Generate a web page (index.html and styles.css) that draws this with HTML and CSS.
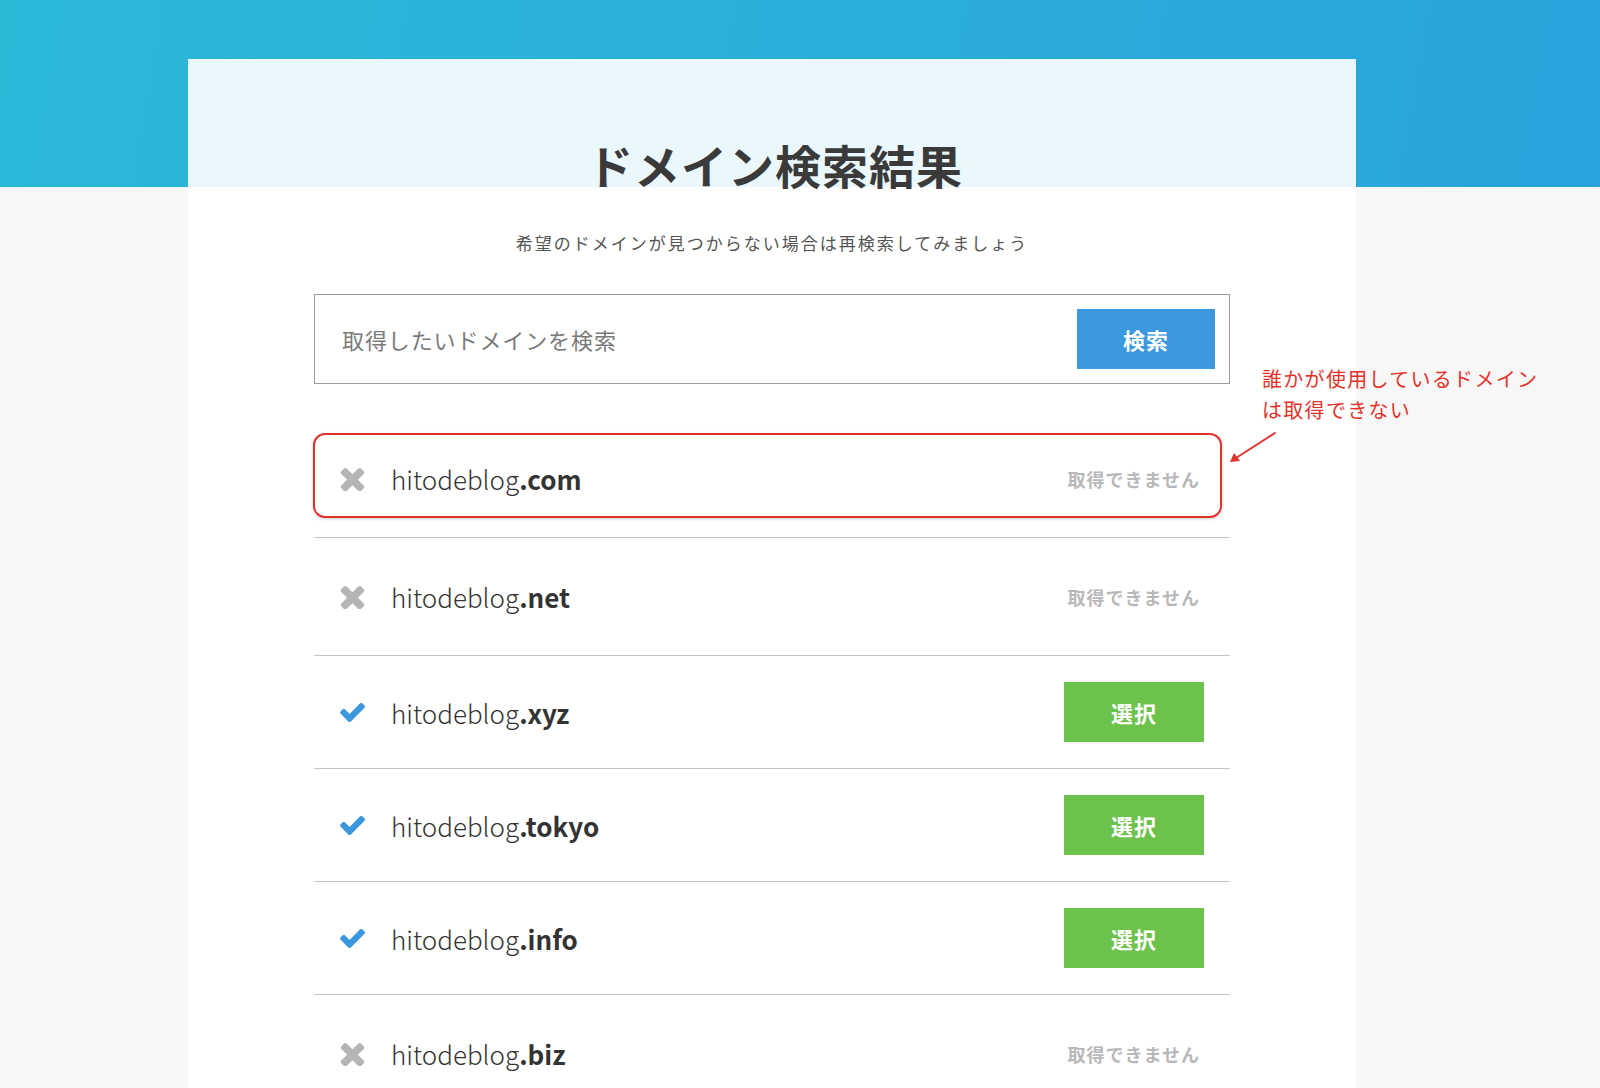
FILE: index.html
```html
<!DOCTYPE html>
<html lang="ja">
<head>
<meta charset="utf-8">
<title>ドメイン検索結果</title>
<link rel="stylesheet" href="styles.css">
</head>
<body>
<div class="page">
  <main class="card">
    <h1 class="title">ドメイン検索結果</h1>
    <p class="lead">希望のドメインが見つからない場合は再検索してみましょう</p>
    <form class="search">
      <input class="search-input" type="text" placeholder="取得したいドメインを検索">
      <button class="search-btn" type="button">検索</button>
    </form>
    <div class="results-wrap">
      <ul class="results">
        <li class="row taken">
          <svg class="icon icon-x" viewBox="110 266 1188 1260"><path d="M1298 1322q0 40-28 68l-136 136q-28 28-68 28t-68-28l-294-294-294 294q-28 28-68 28t-68-28l-136-136q-28-28-28-68t28-68l294-294-294-294q-28-28-28-68t28-68l136-136q28-28 68-28t68 28l294 294 294-294q28-28 68-28t68 28l136 136q28 28 28 68t-28 68l-294 294 294 294q28 28 28 68z"/></svg>
          <span class="domain">hitodeblog<b>.com</b></span>
          <span class="status">取得できません</span>
        </li>
        <li class="row taken">
          <svg class="icon icon-x" viewBox="110 266 1188 1260"><path d="M1298 1322q0 40-28 68l-136 136q-28 28-68 28t-68-28l-294-294-294 294q-28 28-68 28t-68-28l-136-136q-28-28-28-68t28-68l294-294-294-294q-28-28-28-68t28-68l136-136q28-28 68-28t68 28l294 294 294-294q28-28 68-28t68 28l136 136q28 28 28 68t-28 68l-294 294 294 294q28 28 28 68z"/></svg>
          <span class="domain">hitodeblog<b>.net</b></span>
          <span class="status">取得できません</span>
        </li>
        <li class="row">
          <svg class="icon icon-check" viewBox="121 334 1550 1188"><path d="M1671 566q0 40-28 68l-724 724-136 136q-28 28-68 28t-68-28l-136-136-362-362q-28-28-28-68t28-68l136-136q28-28 68-28t68 28l294 295 656-657q28-28 68-28t68 28l136 136q28 28 28 68z"/></svg>
          <span class="domain">hitodeblog<b>.xyz</b></span>
          <button class="select-btn" type="button">選択</button>
        </li>
        <li class="row">
          <svg class="icon icon-check" viewBox="121 334 1550 1188"><path d="M1671 566q0 40-28 68l-724 724-136 136q-28 28-68 28t-68-28l-136-136-362-362q-28-28-28-68t28-68l136-136q28-28 68-28t68 28l294 295 656-657q28-28 68-28t68 28l136 136q28 28 28 68z"/></svg>
          <span class="domain">hitodeblog<b>.tokyo</b></span>
          <button class="select-btn" type="button">選択</button>
        </li>
        <li class="row">
          <svg class="icon icon-check" viewBox="121 334 1550 1188"><path d="M1671 566q0 40-28 68l-724 724-136 136q-28 28-68 28t-68-28l-136-136-362-362q-28-28-28-68t28-68l136-136q28-28 68-28t68 28l294 295 656-657q28-28 68-28t68 28l136 136q28 28 28 68z"/></svg>
          <span class="domain">hitodeblog<b>.info</b></span>
          <button class="select-btn" type="button">選択</button>
        </li>
        <li class="row taken">
          <svg class="icon icon-x" viewBox="110 266 1188 1260"><path d="M1298 1322q0 40-28 68l-136 136q-28 28-68 28t-68-28l-294-294-294 294q-28 28-68 28t-68-28l-136-136q-28-28-28-68t28-68l294-294-294-294q-28-28-28-68t28-68l136-136q28-28 68-28t68 28l294 294 294-294q28-28 68-28t68 28l136 136q28 28 28 68t-28 68l-294 294 294 294q28 28 28 68z"/></svg>
          <span class="domain">hitodeblog<b>.biz</b></span>
          <span class="status">取得できません</span>
        </li>
      </ul>
      <div class="highlight"></div>
      <p class="note">誰かが使用しているドメイン<br>は取得できない</p>
      <svg class="note-arrow" viewBox="0 0 50 36"><line x1="47" y1="3" x2="8" y2="28" stroke="#e2332a" stroke-width="2" stroke-linecap="round"/><polygon points="2,32 6,23 12,31" fill="#e2332a"/></svg>
    </div>
  </main>
</div>
</body>
</html>
```

FILE: styles.css
```css
html, body {
  margin: 0;
  padding: 0;
}

body {
  font-family: "Noto Sans CJK JP", "Noto Sans", sans-serif;
  color: #333;
  background: #f7f7f7;
}

.page {
  height: 1088px;
  overflow: hidden;
  background: linear-gradient(100deg, #2bb9d8 0%, #2aaeda 55%, #29a3da 100%) top left / 100% 187px no-repeat, #f7f7f7;
  padding-top: 59px;
  box-sizing: border-box;
}

.card {
  margin-left: 188px;
  width: 1168px;
  min-height: 1029px;
  box-sizing: border-box;
  padding: 75px 126px 0;
  background: rgba(255, 255, 255, 0.9);
}

.title {
  margin: 0;
  font-size: 46px;
  line-height: 60px;
  font-weight: 700;
  color: #3a3a3a;
  text-align: center;
  letter-spacing: 1px;
  padding-left: 6px;
}

.lead {
  margin: 37px 0 0;
  font-size: 17px;
  line-height: 24px;
  color: #555;
  text-align: center;
  letter-spacing: 2px;
}

.search {
  margin: 39px 0 0;
  display: flex;
  align-items: center;
  padding: 14px;
  border: 1px solid #9c9c9c;
  background: #fff;
}

.search-input {
  flex: 1;
  border: none;
  outline: none;
  background: transparent;
  padding: 0 0 0 13px;
  font-family: inherit;
  font-size: 22px;
  letter-spacing: 0.9px;
  color: #333;
  height: 60px;
}

.search-input::placeholder {
  color: #7a7a7a;
}

.search-btn {
  width: 138px;
  height: 60px;
  border: none;
  background: #3b97de;
  color: #fff;
  font-family: inherit;
  font-size: 22px;
  font-weight: 700;
  letter-spacing: 1px;
  padding: 0;
}

.results-wrap {
  position: relative;
  margin-top: 36px;
}

.results {
  list-style: none;
  margin: 0;
  padding: 0;
}

.row {
  display: flex;
  align-items: center;
  height: 112px;
  padding: 0 26px;
  border-bottom: 1px solid #c4c4c4;
}

.row.taken {
  height: 117px;
}

.icon {
  width: 25px;
  height: 25px;
  flex: none;
  margin-right: 26px;
}

.icon-x {
  fill: #b5b5b5;
}

.icon-check {
  fill: #3b97de;
  height: 21px;
}

.domain {
  font-size: 26px;
  font-weight: 300;
  color: #333;
}

.domain b {
  font-weight: 700;
}

.status {
  margin-left: auto;
  margin-right: 4px;
  font-size: 18px;
  font-weight: 700;
  letter-spacing: 1px;
  color: #b8b8b8;
}

.select-btn {
  margin-left: auto;
  width: 140px;
  height: 60px;
  border: none;
  padding: 0;
  background: #6cc24a;
  color: #fff;
  font-family: inherit;
  font-size: 22px;
  font-weight: 700;
  letter-spacing: 1px;
}

.highlight {
  position: absolute;
  left: -1px;
  top: 13px;
  width: 905px;
  height: 81px;
  border: 2px solid #e2332a;
  border-radius: 12px;
  box-shadow: 0 1px 3px rgba(0, 0, 0, 0.2);
}

.note {
  position: absolute;
  left: 948px;
  top: -57px;
  margin: 0;
  width: 320px;
  font-size: 20px;
  line-height: 31px;
  letter-spacing: 1.3px;
  color: #e2332a;
  white-space: nowrap;
}

.note-arrow {
  position: absolute;
  left: 914px;
  top: 10px;
  width: 50px;
  height: 36px;
}
```
